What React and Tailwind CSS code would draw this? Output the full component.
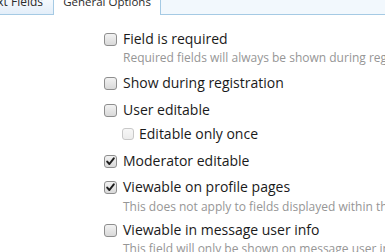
import React from "react";

function Box({ checked = false, disabled = false }) {
  return (
    <span
      className={
        "relative inline-flex shrink-0 items-center justify-center rounded-[3px] border " +
        (disabled
          ? "h-[12px] w-[12px] border-[#c8c8c8] bg-gradient-to-b from-[#f7f7f7] to-[#ececec]"
          : "h-[13px] w-[13px] border-[#8e8e8e] bg-gradient-to-b from-[#f2f2f2] to-[#d9d9d9]")
      }
    >
      {checked && (
        <svg width="11" height="11" viewBox="0 0 11 11" className="block">
          <path d="M2.2 5.6 L4.4 8 L8.8 2.4" fill="none" stroke="#1e1e1e" strokeWidth="2" strokeLinecap="round" strokeLinejoin="round" />
        </svg>
      )}
    </span>
  );
}

function Row({ children, checked, disabled, className = "" }) {
  return (
    <div className={"flex h-[18px] items-center gap-[6px] " + className}>
      <Box checked={checked} disabled={disabled} />
      <span className="whitespace-nowrap text-[14px] leading-[18px] text-[#1a1a1a]">{children}</span>
    </div>
  );
}

function Desc({ children, className = "" }) {
  return (
    <div className={"h-[14px] whitespace-nowrap pl-[19px] text-[12px] leading-[14px] text-[#969696] " + className}>
      {children}
    </div>
  );
}

export default function App() {
  return (
    <div
      className="relative h-[252px] w-[385px] overflow-hidden bg-white"
      style={{ fontFamily: '"Open Sans", "Noto Sans", sans-serif' }}
    >
      <div className="flex h-[15px]">
        <div className="flex w-[54px] shrink-0 justify-end overflow-hidden border-r border-b border-[#a5cae4] bg-gradient-to-b from-[#f4f9fd] to-[#e3eef9] pr-[10px]">
          <span className="-mt-[6px] whitespace-nowrap text-[12px] leading-[16px] text-[#2b2b2b]">Options for Text Fields</span>
        </div>
        <div className="flex w-[106px] shrink-0 justify-center overflow-hidden bg-white">
          <span className="-mt-[6px] whitespace-nowrap text-[11.5px] leading-[16px] text-[#2b2b2b]">General Options</span>
        </div>
        <div className="flex-1 border-l border-b border-[#a5cae4] bg-[#f2f8fd]" />
      </div>

      <div className="pl-[104px]">
        <Row className="mt-[15px]">Field is required</Row>
        <Desc className="mt-[3px]">Required fields will always be shown during registration.</Desc>
        <Row className="mt-[9px]">Show during registration</Row>
        <Row className="mt-[9px]">User editable</Row>
        <div className="pl-[18px]">
          <div className="mt-[6px] flex h-[18px] items-center gap-[5px]">
            <Box disabled />
            <span className="whitespace-nowrap text-[14px] leading-[18px] text-[#1a1a1a]">Editable only once</span>
          </div>
        </div>
        <Row className="mt-[9px]" checked>Moderator editable</Row>
        <Row className="mt-[8px]" checked>Viewable on profile pages</Row>
        <Desc className="mt-[4px]">This does not apply to fields displayed within the user's profile.</Desc>
        <Row className="mt-[7px]">Viewable in message user info</Row>
        <Desc className="mt-[3px]">This field will only be shown on message user info if enabled.</Desc>
      </div>
    </div>
  );
}
